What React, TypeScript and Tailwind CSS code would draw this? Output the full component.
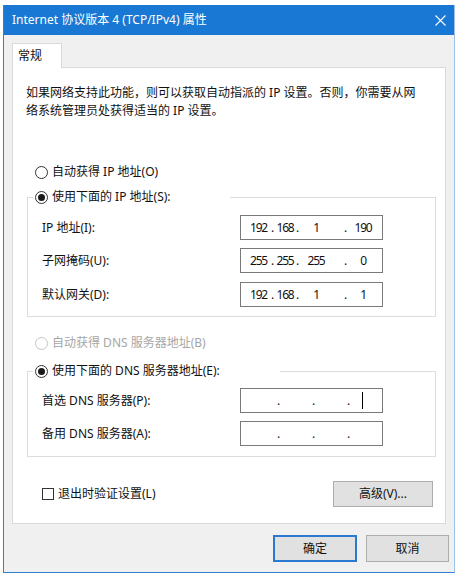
import React from "react";

const FONT = "font-['Noto_Sans','Noto_Sans_CJK_SC',sans-serif]";

function Radio({ checked, disabled }: { checked?: boolean; disabled?: boolean }) {
  return (
    <div
      className={`w-[13px] h-[13px] rounded-full border flex items-center justify-center shrink-0 bg-white ${
        disabled ? "border-[#c4c4c4]" : "border-[#333333]"
      }`}
    >
      {checked && <div className="w-[7px] h-[7px] rounded-full bg-[#1a1a1a]" />}
    </div>
  );
}

function IpBox({ f }: { f: [string, string, string, string] }) {
  return (
    <div className="w-[143px] h-[25px] border border-[#7a7a7a] bg-white flex items-center pl-[5px] text-[12px] leading-[18px] text-[#111]">
      <span className="w-[25px] text-center tracking-[-1.2px]">{f[0]}</span>
      <span className="w-[3px] flex justify-center">.</span>
      <span className="w-[22px] text-center tracking-[-1.2px]">{f[1]}</span>
      <span className="w-[3px] flex justify-center">.</span>
      <span className="w-[45px] pr-[11px] text-center tracking-[-1.2px]">{f[2]}</span>
      <span className="w-[3px] flex justify-center">.</span>
      <span className="w-[32px] text-center tracking-[-1.2px]">{f[3]}</span>
    </div>
  );
}

function EmptyIpBox({ cursor }: { cursor?: boolean }) {
  return (
    <div className="w-[143px] h-[25px] border border-[#7a7a7a] bg-white flex items-center text-[12px] leading-[18px] text-[#111]">
      <span className="ml-[36px] w-[3px] flex justify-center">.</span>
      <span className="ml-[32px] w-[3px] flex justify-center">.</span>
      <span className="ml-[32px] w-[3px] flex justify-center">.</span>
      {cursor && <span className="ml-[12px] w-px h-[17px] bg-black" />}
    </div>
  );
}

function Row({ label, children, mt }: { label: string; children: React.ReactNode; mt: string }) {
  return (
    <div className={`flex items-center pl-[14px] ${mt}`}>
      <span className="w-[198px] text-[12px] leading-[18px] text-[#111]">{label}</span>
      {children}
    </div>
  );
}

export default function App() {
  return (
    <div className={`w-[464px] h-[578px] bg-white overflow-hidden ${FONT}`}>
      <div className="ml-[3px] mt-[5px] w-[452px] h-[568px] flex flex-col bg-[#f0f0f0] border-l border-b border-[#2f7fcf] border-r border-r-[#9fc3e6]">
        {/* Title bar */}
        <div className="h-[30px] bg-[#1878d3] flex items-center justify-between pl-[8px] pr-[7px] shrink-0">
          <span className="text-white text-[12px] leading-[18px]">Internet 协议版本 4 (TCP/IPv4) 属性</span>
          <svg width="11" height="11" viewBox="0 0 11 11" className="mr-[1px]">
            <path d="M0.5 0.5 L10.5 10.5 M10.5 0.5 L0.5 10.5" stroke="white" strokeWidth="1.1" fill="none" />
          </svg>
        </div>

        {/* Body */}
        <div className="flex flex-col px-[8px] pt-[8px]">
          {/* Tab */}
          <div className="flex h-[24px]">
            <div className="w-[50px] h-[25px] bg-white border border-b-0 border-[#d9d9d9] pl-[5px] pt-[3px] text-[12px] leading-[18px] text-[#111] relative z-10">
              常规
            </div>
          </div>

          {/* Panel */}
          <div className="w-[434px] h-[457px] border border-[#d9d9d9] bg-white flex flex-col">
            <div className="pl-[13px] mt-[16px] text-[12px] leading-[18px] text-[#111]">
              <div>如果网络支持此功能，则可以获取自动指派的 IP 设置。否则，你需要从网</div>
              <div>络系统管理员处获得适当的 IP 设置。</div>
            </div>

            <div className="mt-[43px] pl-[22px] flex items-center gap-[4px] h-[18px]">
              <Radio />
              <span className="text-[12px] leading-[18px] text-[#111]">自动获得 IP 地址(O)</span>
            </div>

            {/* Group 1 */}
            <div className="mt-[16px] ml-[14px] w-[409px] border border-[#dcdcdc] flex flex-col pb-[9px]">
              <div className="-mt-[10px] ml-[5px] w-[197px] h-[18px] bg-white flex items-center gap-[4px] pl-[2px]">
                <Radio checked />
                <span className="text-[12px] leading-[18px] text-[#111]">使用下面的 IP 地址(S):</span>
              </div>
              <Row label="IP 地址(I):" mt="mt-[9px]">
                <IpBox f={["192", "168", "1", "190"]} />
              </Row>
              <Row label="子网掩码(U):" mt="mt-[8px]">
                <IpBox f={["255", "255", "255", "0"]} />
              </Row>
              <Row label="默认网关(D):" mt="mt-[9px]">
                <IpBox f={["192", "168", "1", "1"]} />
              </Row>
            </div>

            <div className="mt-[17px] pl-[22px] flex items-center gap-[4px] h-[18px]">
              <Radio disabled />
              <span className="text-[12px] leading-[18px] text-[#a6a6a6]">自动获得 DNS 服务器地址(B)</span>
            </div>

            {/* Group 2 */}
            <div className="mt-[19px] ml-[14px] w-[409px] border border-[#dcdcdc] flex flex-col pb-[10px]">
              <div className="-mt-[10px] ml-[5px] w-[247px] h-[18px] bg-white flex items-center gap-[4px] pl-[2px]">
                <Radio checked />
                <span className="text-[12px] leading-[18px] text-[#111]">使用下面的 DNS 服务器地址(E):</span>
              </div>
              <Row label="首选 DNS 服务器(P):" mt="mt-[8px]">
                <EmptyIpBox cursor />
              </Row>
              <Row label="备用 DNS 服务器(A):" mt="mt-[8px]">
                <EmptyIpBox />
              </Row>
            </div>

            <div className="mt-[24px] flex items-center justify-between pl-[29px] pr-[12px]">
              <div className="flex items-center gap-[4px]">
                <div className="w-[12px] h-[12px] border border-[#333333] bg-white" />
                <span className="text-[12px] leading-[18px] text-[#111]">退出时验证设置(L)</span>
              </div>
              <button className="w-[100px] h-[26px] bg-[#e1e1e1] border border-[#adadad] text-[12px] leading-[18px] text-[#111]">
                高级(V)...
              </button>
            </div>
          </div>

          {/* Bottom buttons */}
          <div className="mt-[11px] flex justify-end gap-[9px] -mr-[3px]">
            <button className="w-[84px] h-[27px] bg-[#e1e1e1] border-2 border-[#2a7ad2] text-[12px] leading-[18px] text-[#111]">
              确定
            </button>
            <button className="w-[83px] h-[27px] bg-[#e1e1e1] border border-[#adadad] text-[12px] leading-[18px] text-[#111]">
              取消
            </button>
          </div>
        </div>
      </div>
    </div>
  );
}
